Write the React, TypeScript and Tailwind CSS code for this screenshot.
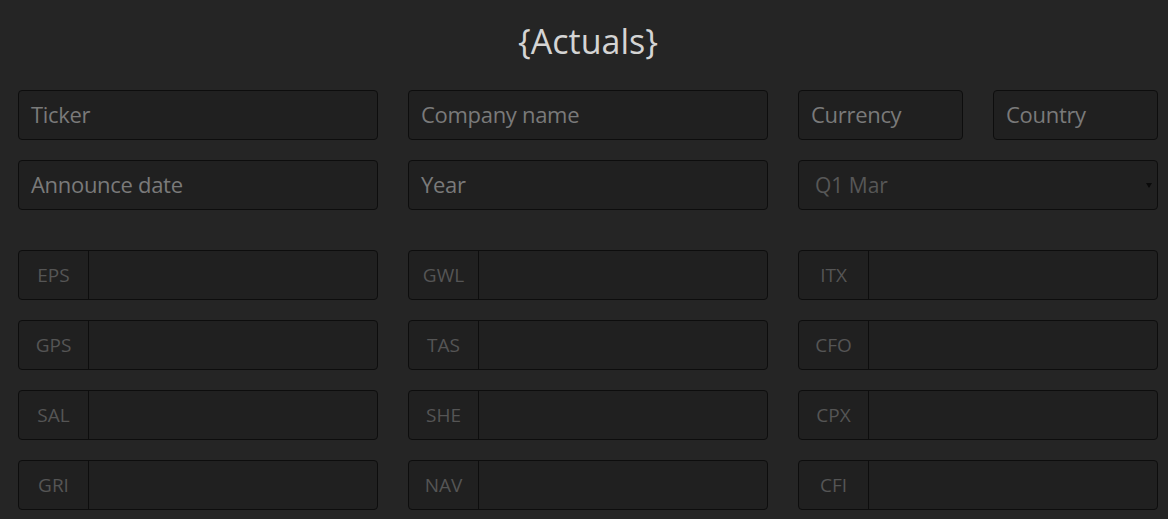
import React from "react";

const font = { fontFamily: '"Open Sans", "Noto Sans", sans-serif' };

function TextBox({ placeholder, className = "" }: { placeholder: string; className?: string }) {
  return (
    <div
      className={`h-[50px] rounded-[4px] border border-[#0d0d0d] bg-[#202020] flex items-center px-[12px] pb-[2px] text-[22px] text-[#7a7a7a] ${className}`}
    >
      <span className="tracking-[-0.3px]">{placeholder}</span>
    </div>
  );
}

function Addon({ label }: { label: string }) {
  return (
    <div className="h-[50px] rounded-[4px] border border-[#0d0d0d] bg-[#202020] flex">
      <div className="w-[70px] shrink-0 border-r border-[#0d0d0d] flex items-center justify-center text-[19px] text-[#555555]">
        {label}
      </div>
      <div className="flex-1" />
    </div>
  );
}

export default function App() {
  const rows = [
    ["EPS", "GWL", "ITX"],
    ["GPS", "TAS", "CFO"],
    ["SAL", "SHE", "CPX"],
    ["GRI", "NAV", "CFI"],
  ];
  return (
    <div className="w-[1168px] h-[519px] bg-[#252525] overflow-hidden" style={font}>
      <div className="ml-[18px] w-[1140px]">
        <div className="pt-[18px] h-[90px] text-center text-[34px] leading-[46px] text-[#d4d4d4]">
          {"{Actuals}"}
        </div>
        <div className="grid grid-cols-[360px_360px_360px] gap-x-[30px] gap-y-[20px]">
          <TextBox placeholder="Ticker" />
          <TextBox placeholder="Company name" />
          <div className="grid grid-cols-[165px_165px] gap-x-[30px]">
            <TextBox placeholder="Currency" />
            <TextBox placeholder="Country" />
          </div>
          <TextBox placeholder="Announce date" />
          <TextBox placeholder="Year" />
          <div className="h-[50px] rounded-[4px] border border-[#0d0d0d] bg-[#202020] flex items-center justify-between pl-[16px] pr-[5px] pt-[2px] text-[21px] text-[#575757]">
            <span>Q1 Mar</span>
            <svg width="6" height="5" viewBox="0 0 6 5" className="mb-[2px]">
              <path d="M0 0 H6 L3 5 Z" fill="#0a0a0a" />
            </svg>
          </div>
        </div>
        <div className="mt-[40px] grid grid-cols-[360px_360px_360px] gap-x-[30px] gap-y-[20px]">
          {rows.flat().map((l) => (
            <Addon key={l} label={l} />
          ))}
        </div>
      </div>
    </div>
  );
}
